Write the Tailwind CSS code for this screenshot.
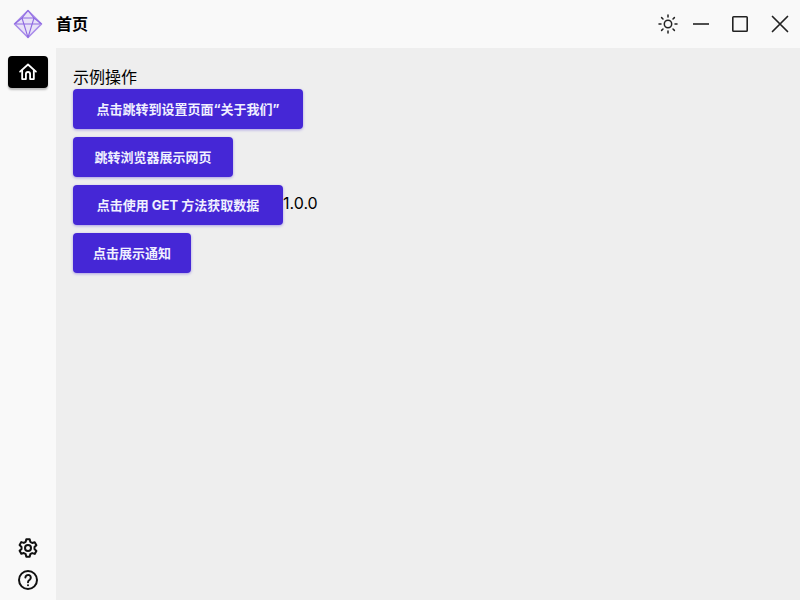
<!doctype html>
<html lang="zh-CN"><head><meta charset="utf-8">
<script src="https://cdn.jsdelivr.net/npm/@tailwindcss/browser@4"></script>
</head>
<body class="m-0 w-[800px] h-[600px] overflow-hidden bg-[#f9f9f9] text-black font-['Inter','Noto_Sans_CJK_SC',sans-serif]">
<div class="flex flex-col h-[600px]">
  <header class="h-12 flex items-center shrink-0">
    <div class="w-14 flex justify-center">
      <svg width="30" height="30" viewBox="0 0 30 30" fill="none" stroke-linejoin="round">
        <path d="M15 1.5 L28.5 15 L15 28.5 L1.5 15 Z" fill="#c9b6f4" fill-opacity=".35" stroke="#a98bea" stroke-width="1.6"/>
        <path d="M1.5 15 L9 9 L15 1.5 L21 9 L28.5 15 M9 9 L21 9 M9 9 L15 28.5 L21 9 M3 15 H27" stroke="#8f6ae2" stroke-width="1.1"/>
      </svg>
    </div>
    <span class="text-base font-semibold leading-6">首页</span>
    <div class="ml-auto flex items-center">
      <button class="w-10 h-12 flex items-center justify-center">
        <svg width="20" height="20" viewBox="0 0 20 20" fill="none" stroke="#222" stroke-width="1.5" stroke-linecap="round"><circle cx="10" cy="10" r="3.7"/><path d="M10 1v2M10 17v2M1 10h2M17 10h2M3.6 3.6L5 5M15 15l1.4 1.4M3.6 16.4L5 15M15 5l1.4-1.4"/></svg>
      </button>
      <button class="w-[26px] h-12 flex items-center justify-center">
        <svg width="18" height="18" viewBox="0 0 18 18" stroke="#222" stroke-width="1.6"><path d="M1 9h16"/></svg>
      </button>
      <button class="w-[52px] h-12 flex items-center justify-center">
        <svg width="16" height="16" viewBox="0 0 16 16" fill="none" stroke="#222" stroke-width="1.6"><rect x=".8" y=".8" width="14.4" height="14.4" rx=".8"/></svg>
      </button>
      <button class="w-7 mr-[6px] h-12 flex items-center justify-center">
        <svg width="18" height="18" viewBox="0 0 18 18" stroke="#222" stroke-width="1.7" stroke-linecap="round"><path d="M1.5 1.5l15 15M16.5 1.5l-15 15"/></svg>
      </button>
    </div>
  </header>
  <div class="flex flex-1 min-h-0">
    <nav class="w-14 shrink-0 flex flex-col items-center pt-2 pb-2">
      <a class="w-10 h-8 rounded bg-black flex items-center justify-center shadow-[0_2px_2px_rgba(0,0,0,0.25)]">
        <svg width="20" height="20" viewBox="0 0 24 24" fill="none" stroke="#fff" stroke-width="2.2" stroke-linejoin="round" stroke-linecap="round"><path d="M2.5 11.5 12 3l9.5 8.5"/><path d="M5 10v10.5h4.5V14.5a2.5 2.5 0 0 1 5 0v6H19V10"/></svg>
      </a>
      <div class="mt-auto flex flex-col items-center gap-2">
        <div class="w-6 h-6 flex items-center justify-center">
          <svg width="24" height="24" viewBox="0 0 24 24" fill="none" stroke="#111" stroke-width="2" stroke-linejoin="round"><path d="M10.3 3.3h3.4l.6 2.6 1.9 1.1 2.5-.8 1.7 3-1.9 1.8v2.1l1.9 1.8-1.7 3-2.5-.8-1.9 1.1-.6 2.6h-3.4l-.6-2.6L7.8 17l-2.5.8-1.7-3 1.9-1.8v-2.1L3.6 9.1l1.7-3 2.5.8 1.9-1.1z"/><circle cx="12" cy="12" r="3"/></svg>
        </div>
        <div class="w-6 h-6 flex items-center justify-center">
          <svg width="24" height="24" viewBox="0 0 24 24" fill="none" stroke="#111" stroke-width="2" stroke-linecap="round"><circle cx="12" cy="12" r="9"/><path d="M9.4 9.6a2.7 2.7 0 1 1 4.3 2.2c-1 .7-1.7 1.2-1.7 2.4"/><path d="M12 17.2v.1"/></svg>
        </div>
      </div>
    </nav>
    <main class="flex-1 bg-[#eeeeee] pl-[17px] pt-[18px] text-base leading-[23px]">
      <div>示例操作</div>
      <div class="flex flex-col items-start gap-2">
        <button class="h-10 w-[230px] rounded bg-[#4527d6] text-[#f0f0ff] text-[13px] font-bold shadow-[0_1px_3px_rgba(69,39,214,0.4)]">点击跳转到设置页面“关于我们”</button>
        <button class="h-10 w-40 rounded bg-[#4527d6] text-[#f0f0ff] text-[13px] font-bold shadow-[0_1px_3px_rgba(69,39,214,0.4)]">跳转浏览器展示网页</button>
        <div class="flex items-start">
          <button class="h-10 w-[210px] rounded bg-[#4527d6] text-[#f0f0ff] text-[13px] font-bold shadow-[0_1px_3px_rgba(69,39,214,0.4)]">点击使用 GET 方法获取数据</button>
          <span class="mt-[7px]">1.0.0</span>
        </div>
        <button class="h-10 w-[118px] rounded bg-[#4527d6] text-[#f0f0ff] text-[13px] font-bold shadow-[0_1px_3px_rgba(69,39,214,0.4)]">点击展示通知</button>
      </div>
    </main>
  </div>
</div>
</body></html>
